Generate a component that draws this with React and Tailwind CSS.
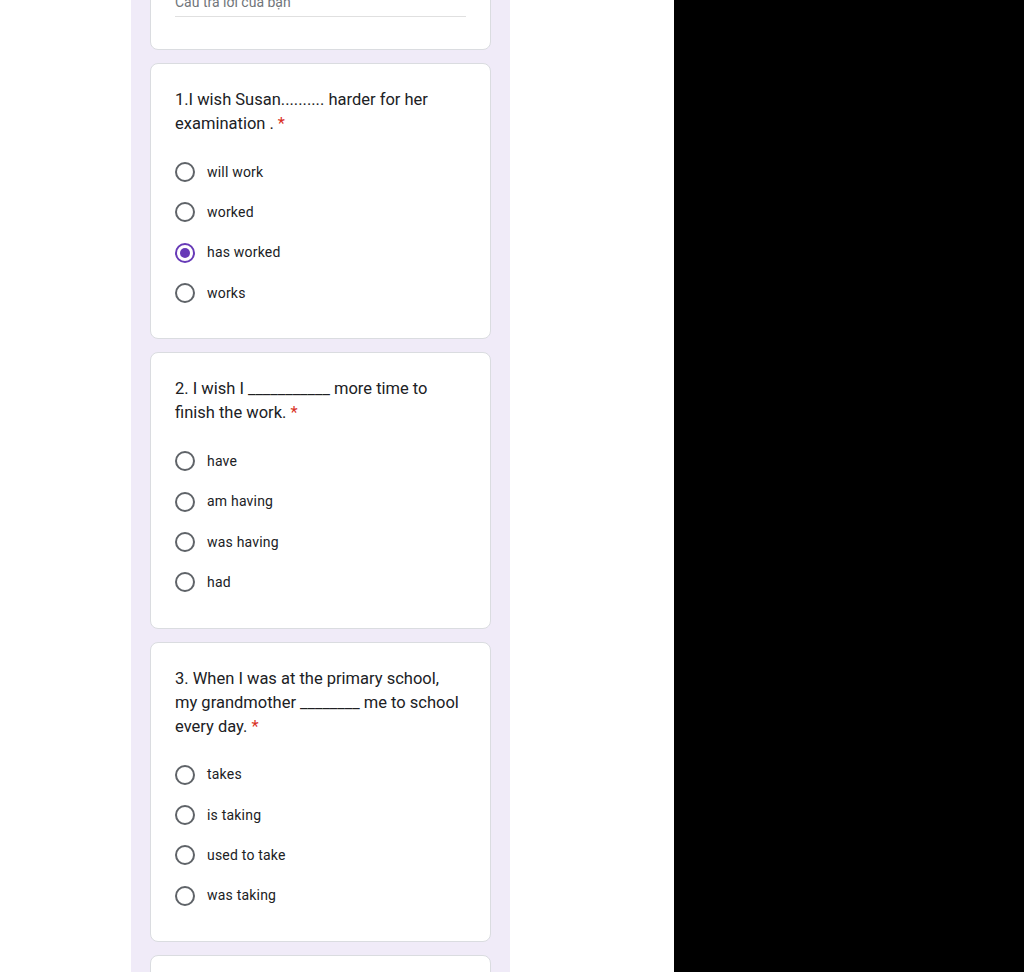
const questions = [
  {
    title: ["1.I wish Susan.......... harder for her", "examination ."],
    options: ["will work", "worked", "has worked", "works"],
    picked: 2,
  },
  {
    title: ["2. I wish I ___________ more time to", "finish the work."],
    options: ["have", "am having", "was having", "had"],
    picked: -1,
  },
  {
    title: [
      "3. When I was at the primary school,",
      "my grandmother ________ me to school",
      "every day.",
    ],
    options: ["takes", "is taking", "used to take", "was taking"],
    picked: -1,
  },
];

const Radio = ({ checked }) => (
  <span
    className={
      checked
        ? "flex h-5 w-5 shrink-0 items-center justify-center rounded-full border-2 border-[#673ab7]"
        : "flex h-5 w-5 shrink-0 items-center justify-center rounded-full border-2 border-[#5f6368]"
    }
  >
    {checked && <span className="h-[10px] w-[10px] rounded-full bg-[#673ab7]" />}
  </span>
);

const Question = ({ q }) => (
  <div className="rounded-lg border border-[#dadce0] bg-white px-6 pt-6 pb-[25px]">
    <h2 className="text-[16.5px] leading-6 text-[#202124]">
      {q.title.map((line, i) => (
        <span key={i}>
          {line}
          {i === q.title.length - 1 ? (
            <span className="ml-1 text-[#d93025]">*</span>
          ) : (
            <br />
          )}
        </span>
      ))}
    </h2>
    <div className="mt-4">
      {q.options.map((opt, i) => (
        <label key={opt} className="flex h-[40.33px] items-center gap-3">
          <Radio checked={i === q.picked} />
          <span className="text-[14px] tracking-[0.2px] text-[#202124]">{opt}</span>
        </label>
      ))}
    </div>
  </div>
);

export default function App() {
  return (
    <div className="flex h-[972px] overflow-hidden bg-black font-['Roboto',sans-serif]">
      <div className="w-[674px] shrink-0 bg-white pl-[131px]">
        <div className="flex h-full w-[379px] flex-col gap-[13px] bg-[#f0ebf8] pl-[19px] pr-[19px]">
          <div className="-mt-[60px] h-[110px] shrink-0 rounded-lg border border-[#dadce0] bg-white px-6 pt-[51px]">
            <div className="border-b border-[#e0e0e0] pb-1 text-[14px] leading-5 text-[#70757a]">
              Câu trả lời của bạn
            </div>
          </div>
          {questions.map((q, i) => (
            <Question key={i} q={q} />
          ))}
          <div className="h-[60px] shrink-0 rounded-lg border border-[#dadce0] bg-white" />
        </div>
      </div>
    </div>
  );
}
